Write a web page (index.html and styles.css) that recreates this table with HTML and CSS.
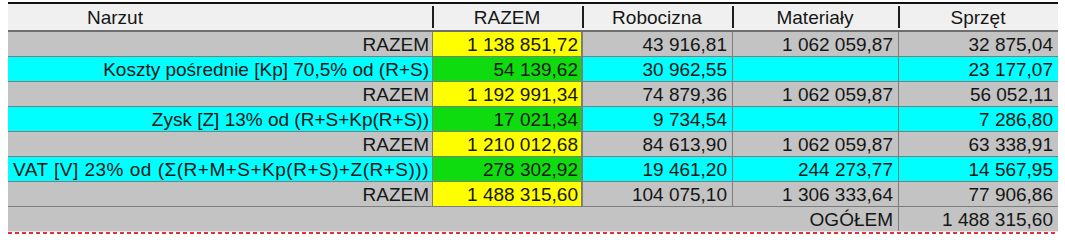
FILE: index.html
```html
<!DOCTYPE html>
<html lang="pl">
<head>
<meta charset="utf-8">
<title>Narzuty</title>
<link rel="stylesheet" href="styles.css">
</head>
<body>
<div class="sheet">
  <div class="grid head">
    <div class="h h-name">Narzut</div>
    <div class="h">RAZEM</div>
    <div class="h">Robocizna</div>
    <div class="h">Materiały</div>
    <div class="h">Sprzęt</div>
  </div>

  <div class="grid row grey">
    <div class="c c-name">RAZEM</div>
    <div class="c c-sum">1 138 851,72</div>
    <div class="c">43 916,81</div>
    <div class="c">1 062 059,87</div>
    <div class="c">32 875,04</div>
  </div>
  <div class="grid row cyan">
    <div class="c c-name">Koszty pośrednie [Kp] 70,5% od (R+S)</div>
    <div class="c c-sum">54 139,62</div>
    <div class="c">30 962,55</div>
    <div class="c"></div>
    <div class="c">23 177,07</div>
  </div>
  <div class="grid row grey">
    <div class="c c-name">RAZEM</div>
    <div class="c c-sum">1 192 991,34</div>
    <div class="c">74 879,36</div>
    <div class="c">1 062 059,87</div>
    <div class="c">56 052,11</div>
  </div>
  <div class="grid row cyan">
    <div class="c c-name">Zysk [Z] 13% od (R+S+Kp(R+S))</div>
    <div class="c c-sum">17 021,34</div>
    <div class="c">9 734,54</div>
    <div class="c"></div>
    <div class="c">7 286,80</div>
  </div>
  <div class="grid row grey">
    <div class="c c-name">RAZEM</div>
    <div class="c c-sum">1 210 012,68</div>
    <div class="c">84 613,90</div>
    <div class="c">1 062 059,87</div>
    <div class="c">63 338,91</div>
  </div>
  <div class="grid row cyan">
    <div class="c c-name c-long">VAT [V] 23% od (Σ(R+M+S+Kp(R+S)+Z(R+S)))</div>
    <div class="c c-sum">278 302,92</div>
    <div class="c">19 461,20</div>
    <div class="c">244 273,77</div>
    <div class="c">14 567,95</div>
  </div>
  <div class="grid row grey">
    <div class="c c-name">RAZEM</div>
    <div class="c c-sum">1 488 315,60</div>
    <div class="c">104 075,10</div>
    <div class="c">1 306 333,64</div>
    <div class="c">77 906,86</div>
  </div>
  <div class="grid row grey total">
    <div class="c c-label">OGÓŁEM</div>
    <div class="c">1 488 315,60</div>
  </div>
  <div class="dash"></div>
</div>
</body>
</html>
```

FILE: styles.css
```css
* { box-sizing: border-box; }

body {
  margin: 0;
  background: #ffffff;
  font-family: "Liberation Sans", Arial, sans-serif;
  font-size: 19px;
  color: #161616;
}

.sheet {
  width: 1050px;
  margin: 2px 0 0 8px;
}

.grid {
  display: grid;
  grid-template-columns: 424px 150px 150px 166px 160px;
}

.head {
  border-top: 2px solid #111;
  border-bottom: 2px solid #6e6e6e;
  background: #f0f0f0;
  height: 30px;
}

.h {
  display: flex;
  align-items: center;
  justify-content: center;
  line-height: 1;
  padding-top: 1px;
  background-image: linear-gradient(#1e1e1e, #1e1e1e);
  background-size: 2px 22px;
  background-position: left center;
  background-repeat: no-repeat;
}

.h-name {
  justify-content: flex-start;
  padding-left: 79px;
  background-image: none;
}

.row {
  height: 25px;
  border-bottom: 1px solid #7d7d7d;
}

.c {
  display: flex;
  align-items: center;
  justify-content: flex-end;
  padding-right: 5px;
  white-space: nowrap;
  overflow: hidden;
  border-left: 1px solid #7d7d7d;
  line-height: 1;
}

.c-name {
  border-left: none;
  padding-right: 3px;
}

.c-long {
  letter-spacing: 0.5px;
}

.c-sum {
  padding-right: 4px;
}

.grey { background: #c3c3c3; }
.cyan { background: #00ffff; }

.grey .c-sum { background: #ffff00; box-shadow: inset -1px 0 #7d7d7d; }
.cyan .c-sum { background: #0fdc0f; box-shadow: inset -1px 0 #7d7d7d; }

.total {
  grid-template-columns: 890px 160px;
  border-bottom: 1px solid #e4e4e4;
}

.c-label {
  border-left: none;
}

.dash {
  height: 2px;
  background-image: repeating-linear-gradient(to right, #e0303a 0 4px, transparent 4px 7px);
}
```
